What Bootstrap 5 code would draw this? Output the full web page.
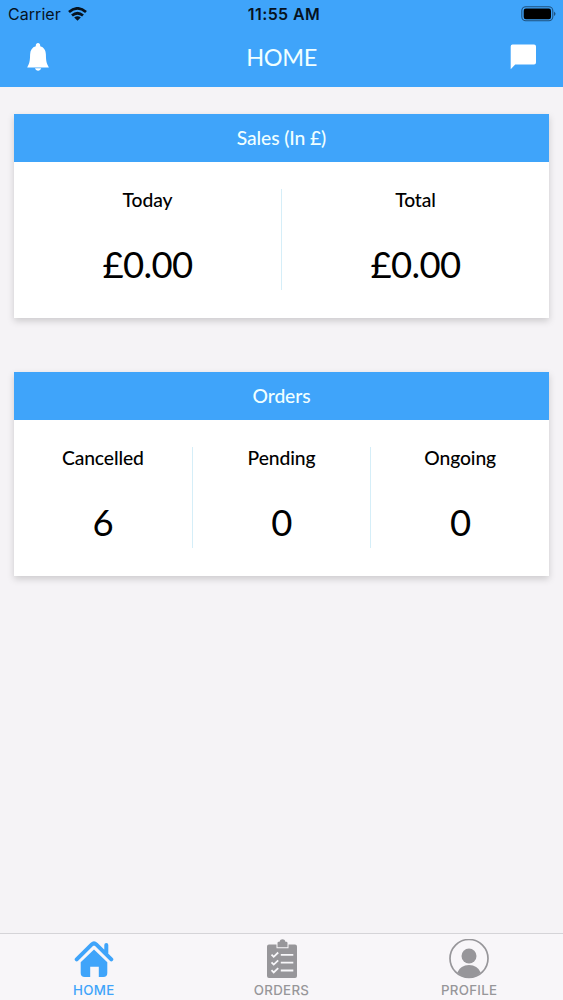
<!DOCTYPE html>
<html lang="en">
<head>
<meta charset="utf-8">
<meta name="viewport" content="width=device-width, initial-scale=1">
<title>Home</title>
<link href="https://cdn.jsdelivr.net/npm/bootstrap@5.3.0/dist/css/bootstrap.min.css" rel="stylesheet">
<style>
  body { background: #f5f3f6; color: #000; font-family: Lato, sans-serif; }
  svg { display: block; flex: none; }
  .app-blue { background: #3fa4fa; }
  .app-top { height: 87px; }
  .status-row { height: 28px; padding: 0 7px 0 8px; font-family: Inter, "Liberation Sans", sans-serif; font-size: 16px; line-height: 28px; color: #06131f; }
  .status-row > div, .title-row > div { flex: 1 1 0; }
  .carrier { letter-spacing: .05px; }
  .wifi { margin-left: 7px; }
  .clock { font-weight: 600; letter-spacing: .4px; padding-left: 4px; }
  .title-row { height: 57px; padding: 0 26px; }
  .page-title { font-size: 23.5px; line-height: 57px; padding-top: 1px; color: #f0ffff; letter-spacing: -.35px; }
  .app-main { padding: 27px 14px 0; }
  .panel { height: 204px; margin-bottom: 54.3px; background: #fff; box-shadow: 0 3px 7px rgba(0,0,0,.17); }
  .panel-title { height: 48px; line-height: 48px; font-size: 19.3px; font-weight: 500; color: #f0ffff; letter-spacing: -.1px; }
  .panel-cols { padding: 27px 0 28px; height: 156px; }
  .stat { flex: 1 1 0; height: 101px; }
  .stat:not(:last-child) { border-right: 1px solid #d5eef8; }
  .stat-label { font-size: 19.3px; line-height: 21px; font-weight: 500; letter-spacing: -.1px; }
  .stat-value { font-size: 36.5px; line-height: 46px; margin-top: 31px; letter-spacing: -.7px; }
  .tabs { height: 67px; border-top: 1px solid #d5d4d8; background: #f8f6f9; font-family: Inter, "Liberation Sans", sans-serif; font-size: 13.3px; font-weight: 500; line-height: 16px; color: #97969a; }
  .tab-item { flex: 1 1 0; padding-top: 5px; letter-spacing: .3px; color: #97969a; }
  .tab-item svg { margin-bottom: 3px; }
  .tab-item.active { color: #3fa4fa; }
</style>
</head>
<body>
<div class="vh-100 d-flex flex-column overflow-hidden">
  <header class="app-top app-blue">
    <div class="status-row d-flex align-items-center">
      <div class="d-flex align-items-center">
        <span class="carrier">Carrier</span>
        <svg class="wifi" width="19" height="14" viewBox="0 0 19 14" fill="none" stroke="#06131f" stroke-width="2.8"><path d="M1 5Q9.5-2.2 18 5M4 8.500q5.500-4.500 11 0"/><path d="M6.200 10.500q3.300-2.500 6.600 0L9.500 13.700z" fill="#06131f" stroke="none"/></svg>
      </div>
      <span class="clock">11:55 AM</span>
      <div class="d-flex justify-content-end">
        <svg width="35" height="16" viewBox="0 0 35 16"><rect x=".8" y=".8" width="31" height="14" rx="4" fill="none" stroke="#1f527f" stroke-width="1.100"/><rect x="2.700" y="2.500" width="27.300" height="10.700" rx="2.200"/><path d="M33 5.500q3 2.300 0 4.600z" fill="#1f527f"/></svg>
      </div>
    </div>
    <div class="title-row d-flex align-items-center">
      <div><svg width="23" height="28" viewBox="0 0 23 28" fill="#fff"><path d="M12 0c1.300 0 2.200 1 2.200 2.300v1c3.700 1 5.600 4 5.700 8.200.1 7 .8 9.300 3 12.900H1.200c2.100-3.600 2.800-5.900 2.900-12.900.1-4.200 2-7.200 5.700-8.200v-1C9.800 1 10.700 0 12 0zM9 25.300h6.200c-.5 1.600-1.600 2.400-3.100 2.400S9.500 26.900 9 25.300z"/></svg></div>
      <span class="page-title">HOME</span>
      <div class="d-flex justify-content-end"><svg width="27" height="26" viewBox="0 0 27 26" fill="#fff"><path d="M2.500.6h21.500q2 0 2 2v16q0 2-2 2H5.200L.7 25.200V2.600q0-2 1.800-2z"/></svg></div>
    </div>
  </header>

  <main class="app-main flex-grow-1 text-center">
    <section class="panel">
      <div class="panel-title app-blue">Sales (In £)</div>
      <div class="panel-cols d-flex">
        <div class="stat"><div class="stat-label">Today</div><div class="stat-value">£0.00</div></div>
        <div class="stat"><div class="stat-label">Total</div><div class="stat-value">£0.00</div></div>
      </div>
    </section>
    <section class="panel">
      <div class="panel-title app-blue">Orders</div>
      <div class="panel-cols d-flex">
        <div class="stat"><div class="stat-label">Cancelled</div><div class="stat-value">6</div></div>
        <div class="stat"><div class="stat-label">Pending</div><div class="stat-value">0</div></div>
        <div class="stat"><div class="stat-label">Ongoing</div><div class="stat-value">0</div></div>
      </div>
    </section>
  </main>

  <nav class="tabs d-flex">
    <a class="tab-item active d-flex flex-column align-items-center text-decoration-none" href="#">
      <svg width="40" height="40" viewBox="0 0 40 40"><path d="M2.700 20.300 17.800 5.400q2.200-2 4.400 0l15.100 14.900M32.300 6V14" fill="none" stroke="currentColor" stroke-width="4" stroke-linecap="round"/><path d="M20 10.500 33.300 23.200V34q0 4-4 4h-4.500V27.800h-8.600V38h-5.500q-4 0-4-4V23.200z" fill="currentColor"/></svg>
      HOME
    </a>
    <a class="tab-item d-flex flex-column align-items-center text-decoration-none" href="#">
      <svg width="40" height="40" viewBox="0 0 40 40"><path d="M7 5.500h7.500v3.800h12V5.500H33q2 0 2 2V37q0 2-2 2H7q-2 0-2-2V7.500q0-2 2-2z" fill="currentColor"/><path d="M15.500 8.300V4q0-1.300 1.300-1.300h.8c.5-1.600 1.500-2.400 2.900-2.400s2.400.8 2.900 2.400h.8q1.300 0 1.300 1.300v4.300z" fill="currentColor"/><path d="m9.500 15.600 2.200 2.200 4.500-4.300M9.500 23.400l2.200 2.200 4.500-4.300M9.500 31.200l2.200 2.200 4.500-4.300M18.800 15.900h12.500M18.800 23.700h12.500M18.800 31.500h12.500" fill="none" stroke="#f8f7fa" stroke-width="1.800"/></svg>
      ORDERS
    </a>
    <a class="tab-item d-flex flex-column align-items-center text-decoration-none" href="#">
      <svg width="40" height="40" viewBox="0 0 40 40"><circle cx="20" cy="19.500" r="19" fill="none" stroke="currentColor" stroke-width="1.700"/><circle cx="20" cy="17" r="7.500" fill="currentColor"/><path d="M8.300 33.500Q11.500 26 20 26t11.700 7.500Q26.500 38.600 20 38.600T8.300 33.500z" fill="currentColor"/></svg>
      PROFILE
    </a>
  </nav>
</div>
<script src="https://cdn.jsdelivr.net/npm/bootstrap@5.3.0/dist/js/bootstrap.bundle.min.js"></script>
</body>
</html>
